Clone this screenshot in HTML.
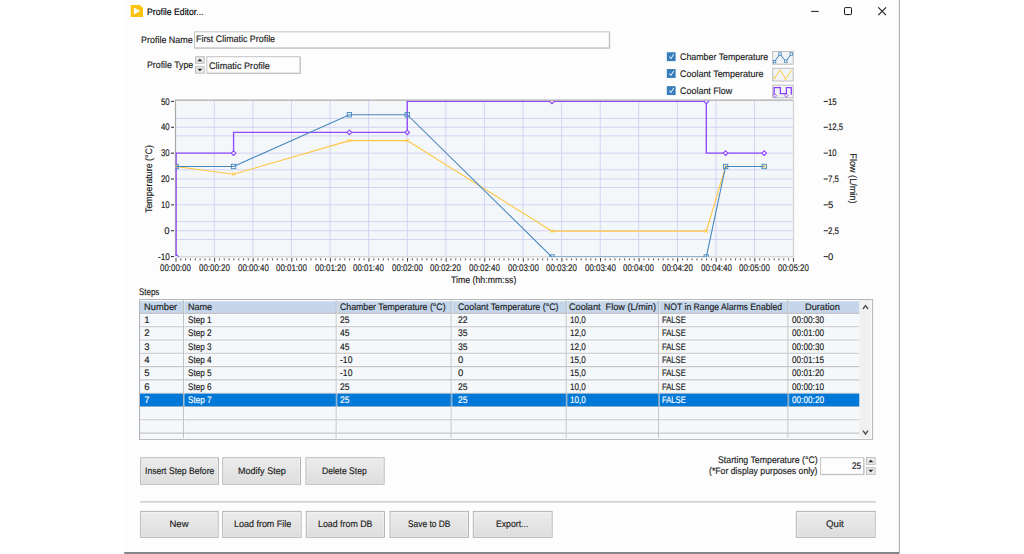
<!DOCTYPE html>
<html><head><meta charset="utf-8"><title>Profile Editor...</title><style>
html,body{margin:0;padding:0;background:#fff;}
body{width:1024px;height:554px;position:relative;overflow:hidden;font-family:"Liberation Sans",sans-serif;}
.abs{position:absolute;}
.t{position:absolute;white-space:pre;line-height:12px;height:12px;transform-origin:0 50%;-webkit-text-stroke:0.15px currentColor;text-rendering:geometricPrecision;}
</style></head><body>
<svg class="abs" style="left:0;top:0" width="1024" height="554" viewBox="0 0 1024 554"><defs><linearGradient id="bg" x1="0" y1="0" x2="0" y2="1"><stop offset="0" stop-color="#ececec"/><stop offset="1" stop-color="#dddddd"/></linearGradient></defs>
<rect x="124.20" y="0.00" width="775.40" height="552.20" fill="#fdfdfd" />
<line x1="899.30" y1="0.00" x2="899.30" y2="552.00" stroke="#a4a4a4" stroke-width="1.0"/>
<rect x="124.2" y="552.0" width="775.4" height="2.2" fill="#86878a"/>
<g transform="translate(130.7,4.9)"><path d="M0 0H9.2L12.3 3.1V12.2H0Z" fill="#ffc20e"/><path d="M3.2 2.7L9.4 6.1L3.2 9.5Z" fill="#fff"/></g>
<g fill="none" stroke="#1c1c1c" stroke-width="1"><path d="M811.1 11.4H818.7"/><rect x="844.5" y="7.6" width="7" height="7" rx="0.7"/><path d="M878.3 7.4L886 15.1M886 7.4L878.3 15.1" stroke-width="1.1"/></g>
<rect x="194.50" y="31.80" width="414.80" height="16.10" fill="#fdfdfd" stroke="#c4c4c4" stroke-width="1.0" />
<path d="M609.70 32.10 V48.30 H194.80" fill="none" stroke="#b4b4b4" stroke-width="0.6"/>
<rect x="206.80" y="56.70" width="93.20" height="16.40" fill="#fdfdfd" stroke="#c4c4c4" stroke-width="1.0" />
<path d="M300.40 57.00 V73.50 H207.10" fill="none" stroke="#b4b4b4" stroke-width="0.6"/>
<rect x="820.60" y="457.70" width="43.10" height="16.60" fill="#fdfdfd" stroke="#c4c4c4" stroke-width="1.0" />
<path d="M864.10 458.00 V474.70 H820.90" fill="none" stroke="#b4b4b4" stroke-width="0.6"/>
<rect x="195.55" y="56.65" width="8.70" height="6.65" fill="#e8e8e8" stroke="#bdbdbd" stroke-width="0.9" />
<path d="M197.40 61.18 L199.90 58.68 L202.40 61.18 Z" fill="#2a2a2a"/>
<rect x="195.55" y="66.60" width="8.70" height="6.65" fill="#e8e8e8" stroke="#bdbdbd" stroke-width="0.9" />
<path d="M197.40 68.73 L199.90 71.23 L202.40 68.73 Z" fill="#2a2a2a"/>
<rect x="866.45" y="457.55" width="8.70" height="6.80" fill="#e8e8e8" stroke="#bdbdbd" stroke-width="0.9" />
<path d="M868.30 462.15 L870.80 459.65 L873.30 462.15 Z" fill="#2a2a2a"/>
<rect x="866.45" y="467.65" width="8.70" height="6.80" fill="#e8e8e8" stroke="#bdbdbd" stroke-width="0.9" />
<path d="M868.30 469.85 L870.80 472.35 L873.30 469.85 Z" fill="#2a2a2a"/>
<g transform="translate(666.8,52.25)"><rect width="8.8" height="8.9" fill="#377dbb"/><path d="M2.7 4.3L4.1 6.5L6.9 1.9" fill="none" stroke="#fff" stroke-width="0.95"/></g>
<rect x="772.70" y="51.50" width="20.50" height="12.70" fill="#f1f4f7" stroke="#bdbdbd" stroke-width="1.0" />
<g transform="translate(666.8,69.05)"><rect width="8.8" height="8.9" fill="#377dbb"/><path d="M2.7 4.3L4.1 6.5L6.9 1.9" fill="none" stroke="#fff" stroke-width="0.95"/></g>
<rect x="772.70" y="68.30" width="20.50" height="12.70" fill="#f1f4f7" stroke="#bdbdbd" stroke-width="1.0" />
<g transform="translate(666.8,86.15)"><rect width="8.8" height="8.9" fill="#377dbb"/><path d="M2.7 4.3L4.1 6.5L6.9 1.9" fill="none" stroke="#fff" stroke-width="0.95"/></g>
<rect x="772.70" y="85.10" width="20.50" height="12.70" fill="#f1f4f7" stroke="#bdbdbd" stroke-width="1.0" />
<g transform="translate(772.2,50.8)" fill="none"><polyline points="2.3,10.9 7.7,3.3 13.6,10.5 19.0,3.3" stroke="#3f83bd" stroke-width="1"/><g stroke="#3f83bd" stroke-width="0.8" fill="#f1f4f7"><rect x="1.1" y="9.6" width="2.5" height="2.5"/><rect x="6.5" y="2.0" width="2.5" height="2.5"/><rect x="12.4" y="9.2" width="2.5" height="2.5"/><rect x="17.8" y="2.0" width="2.5" height="2.5"/></g></g>
<g transform="translate(772.2,67.6)" fill="none"><polyline points="2.3,10.7 7.7,2.4 13.3,11 19.6,2.6" stroke="#ffc63f" stroke-width="1"/><path d="M12.1 9.8l2.4 2.4m0 -2.4l-2.4 2.4M1.1 9.6l2.2 2.2m0 -2.2l-2.2 2.2" stroke="#ffc63f" stroke-width="0.8"/></g>
<g transform="translate(772.2,84.4)" fill="none"><polyline points="1.9,11.2 1.9,3.3 8.2,3.3 8.2,9.3 14.2,9.3 14.2,3.3 19.1,3.3 19.1,10.3" stroke="#8a3ffc" stroke-width="1.3"/><g stroke="#8a3ffc" stroke-width="0.8" fill="#f1f4f7"><path d="M2.7 9.5l1.8 1.8l-1.8 1.8l-1.8 -1.8z"/><path d="M14.1 9.3l1.8 1.8l-1.8 1.8l-1.8 -1.8z"/></g></g>
<rect x="139.55" y="299.60" width="733.00" height="139.75" fill="#f5f8fa" stroke="#b4b5b8" stroke-width="1.1" />
<rect x="140.00" y="300.05" width="719.50" height="1.20" fill="#fafbfc" />
<rect x="140.00" y="301.25" width="719.50" height="11.85" fill="#c5d6ea" />
<line x1="140.00" y1="314.40" x2="859.50" y2="314.40" stroke="rgba(255,255,255,0.7)" stroke-width="0.8"/>
<line x1="140.00" y1="313.40" x2="859.50" y2="313.40" stroke="#c4c4c8" stroke-width="1.1"/>
<line x1="140.00" y1="325.70" x2="859.50" y2="325.70" stroke="rgba(255,255,255,0.7)" stroke-width="0.8"/>
<line x1="140.00" y1="327.70" x2="859.50" y2="327.70" stroke="rgba(255,255,255,0.7)" stroke-width="0.8"/>
<line x1="140.00" y1="326.70" x2="859.50" y2="326.70" stroke="#c4c4c8" stroke-width="1.1"/>
<line x1="140.00" y1="339.00" x2="859.50" y2="339.00" stroke="rgba(255,255,255,0.7)" stroke-width="0.8"/>
<line x1="140.00" y1="341.00" x2="859.50" y2="341.00" stroke="rgba(255,255,255,0.7)" stroke-width="0.8"/>
<line x1="140.00" y1="340.00" x2="859.50" y2="340.00" stroke="#c4c4c8" stroke-width="1.1"/>
<line x1="140.00" y1="352.30" x2="859.50" y2="352.30" stroke="rgba(255,255,255,0.7)" stroke-width="0.8"/>
<line x1="140.00" y1="354.30" x2="859.50" y2="354.30" stroke="rgba(255,255,255,0.7)" stroke-width="0.8"/>
<line x1="140.00" y1="353.30" x2="859.50" y2="353.30" stroke="#c4c4c8" stroke-width="1.1"/>
<line x1="140.00" y1="365.60" x2="859.50" y2="365.60" stroke="rgba(255,255,255,0.7)" stroke-width="0.8"/>
<line x1="140.00" y1="367.60" x2="859.50" y2="367.60" stroke="rgba(255,255,255,0.7)" stroke-width="0.8"/>
<line x1="140.00" y1="366.60" x2="859.50" y2="366.60" stroke="#c4c4c8" stroke-width="1.1"/>
<line x1="140.00" y1="378.90" x2="859.50" y2="378.90" stroke="rgba(255,255,255,0.7)" stroke-width="0.8"/>
<line x1="140.00" y1="380.90" x2="859.50" y2="380.90" stroke="rgba(255,255,255,0.7)" stroke-width="0.8"/>
<line x1="140.00" y1="379.90" x2="859.50" y2="379.90" stroke="#c4c4c8" stroke-width="1.1"/>
<line x1="140.00" y1="392.20" x2="859.50" y2="392.20" stroke="rgba(255,255,255,0.7)" stroke-width="0.8"/>
<line x1="140.00" y1="394.20" x2="859.50" y2="394.20" stroke="rgba(255,255,255,0.7)" stroke-width="0.8"/>
<line x1="140.00" y1="393.20" x2="859.50" y2="393.20" stroke="#c4c4c8" stroke-width="1.1"/>
<line x1="140.00" y1="405.50" x2="859.50" y2="405.50" stroke="rgba(255,255,255,0.7)" stroke-width="0.8"/>
<line x1="140.00" y1="407.50" x2="859.50" y2="407.50" stroke="rgba(255,255,255,0.7)" stroke-width="0.8"/>
<line x1="140.00" y1="406.50" x2="859.50" y2="406.50" stroke="#c4c4c8" stroke-width="1.1"/>
<line x1="140.00" y1="418.80" x2="859.50" y2="418.80" stroke="rgba(255,255,255,0.7)" stroke-width="0.8"/>
<line x1="140.00" y1="420.80" x2="859.50" y2="420.80" stroke="rgba(255,255,255,0.7)" stroke-width="0.8"/>
<line x1="140.00" y1="419.80" x2="859.50" y2="419.80" stroke="#c4c4c8" stroke-width="1.1"/>
<line x1="140.00" y1="432.10" x2="859.50" y2="432.10" stroke="rgba(255,255,255,0.7)" stroke-width="0.8"/>
<line x1="140.00" y1="434.10" x2="859.50" y2="434.10" stroke="rgba(255,255,255,0.7)" stroke-width="0.8"/>
<line x1="140.00" y1="433.10" x2="859.50" y2="433.10" stroke="#c4c4c8" stroke-width="1.1"/>
<rect x="140.00" y="393.70" width="719.50" height="12.60" fill="#0078d7" />
<line x1="183.50" y1="300.05" x2="183.50" y2="438.90" stroke="#b7b7b7" stroke-width="0.9"/>
<line x1="184.30" y1="300.05" x2="184.30" y2="438.90" stroke="rgba(255,255,255,0.7)" stroke-width="0.6"/>
<line x1="336.20" y1="300.05" x2="336.20" y2="438.90" stroke="#b7b7b7" stroke-width="0.9"/>
<line x1="337.00" y1="300.05" x2="337.00" y2="438.90" stroke="rgba(255,255,255,0.7)" stroke-width="0.6"/>
<line x1="451.20" y1="300.05" x2="451.20" y2="438.90" stroke="#b7b7b7" stroke-width="0.9"/>
<line x1="452.00" y1="300.05" x2="452.00" y2="438.90" stroke="rgba(255,255,255,0.7)" stroke-width="0.6"/>
<line x1="566.30" y1="300.05" x2="566.30" y2="438.90" stroke="#b7b7b7" stroke-width="0.9"/>
<line x1="567.10" y1="300.05" x2="567.10" y2="438.90" stroke="rgba(255,255,255,0.7)" stroke-width="0.6"/>
<line x1="658.70" y1="300.05" x2="658.70" y2="438.90" stroke="#b7b7b7" stroke-width="0.9"/>
<line x1="659.50" y1="300.05" x2="659.50" y2="438.90" stroke="rgba(255,255,255,0.7)" stroke-width="0.6"/>
<line x1="788.00" y1="300.05" x2="788.00" y2="438.90" stroke="#b7b7b7" stroke-width="0.9"/>
<line x1="788.80" y1="300.05" x2="788.80" y2="438.90" stroke="rgba(255,255,255,0.7)" stroke-width="0.6"/>
<rect x="859.50" y="300.05" width="12.60" height="138.85" fill="#f0f0f0" />
<path d="M862.9 309.0L865.45 305.6L868.0 309.0" fill="none" stroke="#4c4c4c" stroke-width="1.35"/>
<path d="M862.9 430.6L865.45 434.0L868.0 430.6" fill="none" stroke="#4c4c4c" stroke-width="1.35"/>
<line x1="871.50" y1="300.25" x2="871.50" y2="438.70" stroke="#fbfbfb" stroke-width="0.9"/>
<line x1="140.00" y1="438.30" x2="872.10" y2="438.30" stroke="#fbfbfb" stroke-width="0.9"/>
<rect x="140.70" y="457.80" width="77.70" height="26.40" fill="url(#bg)" stroke="#b2b2b2" stroke-width="1.0" />
<rect x="141.60" y="458.70" width="75.90" height="24.60" fill="none" stroke="rgba(255,255,255,0.45)" stroke-width="0.8"/>
<rect x="222.80" y="457.80" width="77.70" height="26.40" fill="url(#bg)" stroke="#b2b2b2" stroke-width="1.0" />
<rect x="223.70" y="458.70" width="75.90" height="24.60" fill="none" stroke="rgba(255,255,255,0.45)" stroke-width="0.8"/>
<rect x="306.00" y="457.80" width="78.10" height="26.40" fill="url(#bg)" stroke="#b2b2b2" stroke-width="1.0" />
<rect x="306.90" y="458.70" width="76.30" height="24.60" fill="none" stroke="rgba(255,255,255,0.45)" stroke-width="0.8"/>
<rect x="140.70" y="511.40" width="77.40" height="25.90" fill="url(#bg)" stroke="#b2b2b2" stroke-width="1.0" />
<rect x="141.60" y="512.30" width="75.60" height="24.10" fill="none" stroke="rgba(255,255,255,0.45)" stroke-width="0.8"/>
<rect x="222.70" y="511.40" width="78.40" height="25.90" fill="url(#bg)" stroke="#b2b2b2" stroke-width="1.0" />
<rect x="223.60" y="512.30" width="76.60" height="24.10" fill="none" stroke="rgba(255,255,255,0.45)" stroke-width="0.8"/>
<rect x="306.30" y="511.40" width="78.10" height="25.90" fill="url(#bg)" stroke="#b2b2b2" stroke-width="1.0" />
<rect x="307.20" y="512.30" width="76.30" height="24.10" fill="none" stroke="rgba(255,255,255,0.45)" stroke-width="0.8"/>
<rect x="390.10" y="511.40" width="78.40" height="25.90" fill="url(#bg)" stroke="#b2b2b2" stroke-width="1.0" />
<rect x="391.00" y="512.30" width="76.60" height="24.10" fill="none" stroke="rgba(255,255,255,0.45)" stroke-width="0.8"/>
<rect x="473.30" y="511.40" width="78.80" height="25.90" fill="url(#bg)" stroke="#b2b2b2" stroke-width="1.0" />
<rect x="474.20" y="512.30" width="77.00" height="24.10" fill="none" stroke="rgba(255,255,255,0.45)" stroke-width="0.8"/>
<rect x="796.30" y="511.40" width="78.80" height="25.90" fill="url(#bg)" stroke="#b2b2b2" stroke-width="1.0" />
<rect x="797.20" y="512.30" width="77.00" height="24.10" fill="none" stroke="rgba(255,255,255,0.45)" stroke-width="0.8"/>
<line x1="140.00" y1="501.90" x2="876.00" y2="501.90" stroke="#d3d3d3" stroke-width="1.6"/></svg>
<svg class="abs" style="left:0;top:0" width="1024" height="554" viewBox="0 0 1024 554" font-family='"Liberation Sans", sans-serif'><rect x="175.5" y="100.2" width="618.0" height="156.6" fill="#f4f7f9"/>
<line x1="214.29" y1="100.2" x2="214.29" y2="256.8" stroke="#d3d3f4" stroke-width="1"/>
<line x1="252.88" y1="100.2" x2="252.88" y2="256.8" stroke="#d3d3f4" stroke-width="1"/>
<line x1="291.47" y1="100.2" x2="291.47" y2="256.8" stroke="#d3d3f4" stroke-width="1"/>
<line x1="330.06" y1="100.2" x2="330.06" y2="256.8" stroke="#d3d3f4" stroke-width="1"/>
<line x1="368.65" y1="100.2" x2="368.65" y2="256.8" stroke="#d3d3f4" stroke-width="1"/>
<line x1="407.24" y1="100.2" x2="407.24" y2="256.8" stroke="#d3d3f4" stroke-width="1"/>
<line x1="445.83" y1="100.2" x2="445.83" y2="256.8" stroke="#d3d3f4" stroke-width="1"/>
<line x1="484.42" y1="100.2" x2="484.42" y2="256.8" stroke="#d3d3f4" stroke-width="1"/>
<line x1="523.01" y1="100.2" x2="523.01" y2="256.8" stroke="#d3d3f4" stroke-width="1"/>
<line x1="561.60" y1="100.2" x2="561.60" y2="256.8" stroke="#d3d3f4" stroke-width="1"/>
<line x1="600.19" y1="100.2" x2="600.19" y2="256.8" stroke="#d3d3f4" stroke-width="1"/>
<line x1="638.78" y1="100.2" x2="638.78" y2="256.8" stroke="#d3d3f4" stroke-width="1"/>
<line x1="677.37" y1="100.2" x2="677.37" y2="256.8" stroke="#d3d3f4" stroke-width="1"/>
<line x1="715.96" y1="100.2" x2="715.96" y2="256.8" stroke="#d3d3f4" stroke-width="1"/>
<line x1="754.55" y1="100.2" x2="754.55" y2="256.8" stroke="#d3d3f4" stroke-width="1"/>
<line x1="175.5" y1="127.27" x2="793.5" y2="127.27" stroke="#d3d3f4" stroke-width="1"/>
<line x1="175.5" y1="153.13" x2="793.5" y2="153.13" stroke="#d3d3f4" stroke-width="1"/>
<line x1="175.5" y1="179.00" x2="793.5" y2="179.00" stroke="#d3d3f4" stroke-width="1"/>
<line x1="175.5" y1="204.87" x2="793.5" y2="204.87" stroke="#d3d3f4" stroke-width="1"/>
<line x1="175.5" y1="230.73" x2="793.5" y2="230.73" stroke="#d3d3f4" stroke-width="1"/>
<line x1="175.5" y1="118.50" x2="793.5" y2="118.50" stroke="#d3d3f4" stroke-width="1"/>
<line x1="175.5" y1="135.90" x2="793.5" y2="135.90" stroke="#d3d3f4" stroke-width="1"/>
<line x1="175.5" y1="169.80" x2="793.5" y2="169.80" stroke="#d3d3f4" stroke-width="1"/>
<line x1="175.5" y1="187.50" x2="793.5" y2="187.50" stroke="#d3d3f4" stroke-width="1"/>
<line x1="175.5" y1="221.60" x2="793.5" y2="221.60" stroke="#d3d3f4" stroke-width="1"/>
<line x1="175.5" y1="239.50" x2="793.5" y2="239.50" stroke="#d3d3f4" stroke-width="1"/>
<path d="M175.5 256.8 V100.2 H793.5" fill="none" stroke="#a9a9a9" stroke-width="1.2"/>
<path d="M793.5 100.2 V256.8 H175.5" fill="none" stroke="#d0d2d6" stroke-width="1.2"/>
<line x1="176.00" y1="258" x2="176.00" y2="261.7" stroke="#444" stroke-width="1"/>
<line x1="180.82" y1="258.5" x2="180.82" y2="260.3" stroke="#333" stroke-width="0.9"/>
<line x1="185.65" y1="258.5" x2="185.65" y2="260.3" stroke="#333" stroke-width="0.9"/>
<line x1="190.47" y1="258.5" x2="190.47" y2="260.3" stroke="#333" stroke-width="0.9"/>
<line x1="195.30" y1="258.5" x2="195.30" y2="260.3" stroke="#333" stroke-width="0.9"/>
<line x1="200.12" y1="258.5" x2="200.12" y2="260.3" stroke="#333" stroke-width="0.9"/>
<line x1="204.94" y1="258.5" x2="204.94" y2="260.3" stroke="#333" stroke-width="0.9"/>
<line x1="209.77" y1="258.5" x2="209.77" y2="260.3" stroke="#333" stroke-width="0.9"/>
<line x1="214.59" y1="258" x2="214.59" y2="261.7" stroke="#444" stroke-width="1"/>
<line x1="219.41" y1="258.5" x2="219.41" y2="260.3" stroke="#333" stroke-width="0.9"/>
<line x1="224.24" y1="258.5" x2="224.24" y2="260.3" stroke="#333" stroke-width="0.9"/>
<line x1="229.06" y1="258.5" x2="229.06" y2="260.3" stroke="#333" stroke-width="0.9"/>
<line x1="233.88" y1="258.5" x2="233.88" y2="260.3" stroke="#333" stroke-width="0.9"/>
<line x1="238.71" y1="258.5" x2="238.71" y2="260.3" stroke="#333" stroke-width="0.9"/>
<line x1="243.53" y1="258.5" x2="243.53" y2="260.3" stroke="#333" stroke-width="0.9"/>
<line x1="248.36" y1="258.5" x2="248.36" y2="260.3" stroke="#333" stroke-width="0.9"/>
<line x1="253.18" y1="258" x2="253.18" y2="261.7" stroke="#444" stroke-width="1"/>
<line x1="258.00" y1="258.5" x2="258.00" y2="260.3" stroke="#333" stroke-width="0.9"/>
<line x1="262.83" y1="258.5" x2="262.83" y2="260.3" stroke="#333" stroke-width="0.9"/>
<line x1="267.65" y1="258.5" x2="267.65" y2="260.3" stroke="#333" stroke-width="0.9"/>
<line x1="272.47" y1="258.5" x2="272.47" y2="260.3" stroke="#333" stroke-width="0.9"/>
<line x1="277.30" y1="258.5" x2="277.30" y2="260.3" stroke="#333" stroke-width="0.9"/>
<line x1="282.12" y1="258.5" x2="282.12" y2="260.3" stroke="#333" stroke-width="0.9"/>
<line x1="286.95" y1="258.5" x2="286.95" y2="260.3" stroke="#333" stroke-width="0.9"/>
<line x1="291.77" y1="258" x2="291.77" y2="261.7" stroke="#444" stroke-width="1"/>
<line x1="296.59" y1="258.5" x2="296.59" y2="260.3" stroke="#333" stroke-width="0.9"/>
<line x1="301.42" y1="258.5" x2="301.42" y2="260.3" stroke="#333" stroke-width="0.9"/>
<line x1="306.24" y1="258.5" x2="306.24" y2="260.3" stroke="#333" stroke-width="0.9"/>
<line x1="311.06" y1="258.5" x2="311.06" y2="260.3" stroke="#333" stroke-width="0.9"/>
<line x1="315.89" y1="258.5" x2="315.89" y2="260.3" stroke="#333" stroke-width="0.9"/>
<line x1="320.71" y1="258.5" x2="320.71" y2="260.3" stroke="#333" stroke-width="0.9"/>
<line x1="325.54" y1="258.5" x2="325.54" y2="260.3" stroke="#333" stroke-width="0.9"/>
<line x1="330.36" y1="258" x2="330.36" y2="261.7" stroke="#444" stroke-width="1"/>
<line x1="335.18" y1="258.5" x2="335.18" y2="260.3" stroke="#333" stroke-width="0.9"/>
<line x1="340.01" y1="258.5" x2="340.01" y2="260.3" stroke="#333" stroke-width="0.9"/>
<line x1="344.83" y1="258.5" x2="344.83" y2="260.3" stroke="#333" stroke-width="0.9"/>
<line x1="349.66" y1="258.5" x2="349.66" y2="260.3" stroke="#333" stroke-width="0.9"/>
<line x1="354.48" y1="258.5" x2="354.48" y2="260.3" stroke="#333" stroke-width="0.9"/>
<line x1="359.30" y1="258.5" x2="359.30" y2="260.3" stroke="#333" stroke-width="0.9"/>
<line x1="364.13" y1="258.5" x2="364.13" y2="260.3" stroke="#333" stroke-width="0.9"/>
<line x1="368.95" y1="258" x2="368.95" y2="261.7" stroke="#444" stroke-width="1"/>
<line x1="373.77" y1="258.5" x2="373.77" y2="260.3" stroke="#333" stroke-width="0.9"/>
<line x1="378.60" y1="258.5" x2="378.60" y2="260.3" stroke="#333" stroke-width="0.9"/>
<line x1="383.42" y1="258.5" x2="383.42" y2="260.3" stroke="#333" stroke-width="0.9"/>
<line x1="388.25" y1="258.5" x2="388.25" y2="260.3" stroke="#333" stroke-width="0.9"/>
<line x1="393.07" y1="258.5" x2="393.07" y2="260.3" stroke="#333" stroke-width="0.9"/>
<line x1="397.89" y1="258.5" x2="397.89" y2="260.3" stroke="#333" stroke-width="0.9"/>
<line x1="402.72" y1="258.5" x2="402.72" y2="260.3" stroke="#333" stroke-width="0.9"/>
<line x1="407.54" y1="258" x2="407.54" y2="261.7" stroke="#444" stroke-width="1"/>
<line x1="412.36" y1="258.5" x2="412.36" y2="260.3" stroke="#333" stroke-width="0.9"/>
<line x1="417.19" y1="258.5" x2="417.19" y2="260.3" stroke="#333" stroke-width="0.9"/>
<line x1="422.01" y1="258.5" x2="422.01" y2="260.3" stroke="#333" stroke-width="0.9"/>
<line x1="426.83" y1="258.5" x2="426.83" y2="260.3" stroke="#333" stroke-width="0.9"/>
<line x1="431.66" y1="258.5" x2="431.66" y2="260.3" stroke="#333" stroke-width="0.9"/>
<line x1="436.48" y1="258.5" x2="436.48" y2="260.3" stroke="#333" stroke-width="0.9"/>
<line x1="441.31" y1="258.5" x2="441.31" y2="260.3" stroke="#333" stroke-width="0.9"/>
<line x1="446.13" y1="258" x2="446.13" y2="261.7" stroke="#444" stroke-width="1"/>
<line x1="450.95" y1="258.5" x2="450.95" y2="260.3" stroke="#333" stroke-width="0.9"/>
<line x1="455.78" y1="258.5" x2="455.78" y2="260.3" stroke="#333" stroke-width="0.9"/>
<line x1="460.60" y1="258.5" x2="460.60" y2="260.3" stroke="#333" stroke-width="0.9"/>
<line x1="465.43" y1="258.5" x2="465.43" y2="260.3" stroke="#333" stroke-width="0.9"/>
<line x1="470.25" y1="258.5" x2="470.25" y2="260.3" stroke="#333" stroke-width="0.9"/>
<line x1="475.07" y1="258.5" x2="475.07" y2="260.3" stroke="#333" stroke-width="0.9"/>
<line x1="479.90" y1="258.5" x2="479.90" y2="260.3" stroke="#333" stroke-width="0.9"/>
<line x1="484.72" y1="258" x2="484.72" y2="261.7" stroke="#444" stroke-width="1"/>
<line x1="489.54" y1="258.5" x2="489.54" y2="260.3" stroke="#333" stroke-width="0.9"/>
<line x1="494.37" y1="258.5" x2="494.37" y2="260.3" stroke="#333" stroke-width="0.9"/>
<line x1="499.19" y1="258.5" x2="499.19" y2="260.3" stroke="#333" stroke-width="0.9"/>
<line x1="504.01" y1="258.5" x2="504.01" y2="260.3" stroke="#333" stroke-width="0.9"/>
<line x1="508.84" y1="258.5" x2="508.84" y2="260.3" stroke="#333" stroke-width="0.9"/>
<line x1="513.66" y1="258.5" x2="513.66" y2="260.3" stroke="#333" stroke-width="0.9"/>
<line x1="518.49" y1="258.5" x2="518.49" y2="260.3" stroke="#333" stroke-width="0.9"/>
<line x1="523.31" y1="258" x2="523.31" y2="261.7" stroke="#444" stroke-width="1"/>
<line x1="528.13" y1="258.5" x2="528.13" y2="260.3" stroke="#333" stroke-width="0.9"/>
<line x1="532.96" y1="258.5" x2="532.96" y2="260.3" stroke="#333" stroke-width="0.9"/>
<line x1="537.78" y1="258.5" x2="537.78" y2="260.3" stroke="#333" stroke-width="0.9"/>
<line x1="542.61" y1="258.5" x2="542.61" y2="260.3" stroke="#333" stroke-width="0.9"/>
<line x1="547.43" y1="258.5" x2="547.43" y2="260.3" stroke="#333" stroke-width="0.9"/>
<line x1="552.25" y1="258.5" x2="552.25" y2="260.3" stroke="#333" stroke-width="0.9"/>
<line x1="557.08" y1="258.5" x2="557.08" y2="260.3" stroke="#333" stroke-width="0.9"/>
<line x1="561.90" y1="258" x2="561.90" y2="261.7" stroke="#444" stroke-width="1"/>
<line x1="566.72" y1="258.5" x2="566.72" y2="260.3" stroke="#333" stroke-width="0.9"/>
<line x1="571.55" y1="258.5" x2="571.55" y2="260.3" stroke="#333" stroke-width="0.9"/>
<line x1="576.37" y1="258.5" x2="576.37" y2="260.3" stroke="#333" stroke-width="0.9"/>
<line x1="581.19" y1="258.5" x2="581.19" y2="260.3" stroke="#333" stroke-width="0.9"/>
<line x1="586.02" y1="258.5" x2="586.02" y2="260.3" stroke="#333" stroke-width="0.9"/>
<line x1="590.84" y1="258.5" x2="590.84" y2="260.3" stroke="#333" stroke-width="0.9"/>
<line x1="595.67" y1="258.5" x2="595.67" y2="260.3" stroke="#333" stroke-width="0.9"/>
<line x1="600.49" y1="258" x2="600.49" y2="261.7" stroke="#444" stroke-width="1"/>
<line x1="605.31" y1="258.5" x2="605.31" y2="260.3" stroke="#333" stroke-width="0.9"/>
<line x1="610.14" y1="258.5" x2="610.14" y2="260.3" stroke="#333" stroke-width="0.9"/>
<line x1="614.96" y1="258.5" x2="614.96" y2="260.3" stroke="#333" stroke-width="0.9"/>
<line x1="619.78" y1="258.5" x2="619.78" y2="260.3" stroke="#333" stroke-width="0.9"/>
<line x1="624.61" y1="258.5" x2="624.61" y2="260.3" stroke="#333" stroke-width="0.9"/>
<line x1="629.43" y1="258.5" x2="629.43" y2="260.3" stroke="#333" stroke-width="0.9"/>
<line x1="634.26" y1="258.5" x2="634.26" y2="260.3" stroke="#333" stroke-width="0.9"/>
<line x1="639.08" y1="258" x2="639.08" y2="261.7" stroke="#444" stroke-width="1"/>
<line x1="643.90" y1="258.5" x2="643.90" y2="260.3" stroke="#333" stroke-width="0.9"/>
<line x1="648.73" y1="258.5" x2="648.73" y2="260.3" stroke="#333" stroke-width="0.9"/>
<line x1="653.55" y1="258.5" x2="653.55" y2="260.3" stroke="#333" stroke-width="0.9"/>
<line x1="658.38" y1="258.5" x2="658.38" y2="260.3" stroke="#333" stroke-width="0.9"/>
<line x1="663.20" y1="258.5" x2="663.20" y2="260.3" stroke="#333" stroke-width="0.9"/>
<line x1="668.02" y1="258.5" x2="668.02" y2="260.3" stroke="#333" stroke-width="0.9"/>
<line x1="672.85" y1="258.5" x2="672.85" y2="260.3" stroke="#333" stroke-width="0.9"/>
<line x1="677.67" y1="258" x2="677.67" y2="261.7" stroke="#444" stroke-width="1"/>
<line x1="682.49" y1="258.5" x2="682.49" y2="260.3" stroke="#333" stroke-width="0.9"/>
<line x1="687.32" y1="258.5" x2="687.32" y2="260.3" stroke="#333" stroke-width="0.9"/>
<line x1="692.14" y1="258.5" x2="692.14" y2="260.3" stroke="#333" stroke-width="0.9"/>
<line x1="696.96" y1="258.5" x2="696.96" y2="260.3" stroke="#333" stroke-width="0.9"/>
<line x1="701.79" y1="258.5" x2="701.79" y2="260.3" stroke="#333" stroke-width="0.9"/>
<line x1="706.61" y1="258.5" x2="706.61" y2="260.3" stroke="#333" stroke-width="0.9"/>
<line x1="711.44" y1="258.5" x2="711.44" y2="260.3" stroke="#333" stroke-width="0.9"/>
<line x1="716.26" y1="258" x2="716.26" y2="261.7" stroke="#444" stroke-width="1"/>
<line x1="721.08" y1="258.5" x2="721.08" y2="260.3" stroke="#333" stroke-width="0.9"/>
<line x1="725.91" y1="258.5" x2="725.91" y2="260.3" stroke="#333" stroke-width="0.9"/>
<line x1="730.73" y1="258.5" x2="730.73" y2="260.3" stroke="#333" stroke-width="0.9"/>
<line x1="735.55" y1="258.5" x2="735.55" y2="260.3" stroke="#333" stroke-width="0.9"/>
<line x1="740.38" y1="258.5" x2="740.38" y2="260.3" stroke="#333" stroke-width="0.9"/>
<line x1="745.20" y1="258.5" x2="745.20" y2="260.3" stroke="#333" stroke-width="0.9"/>
<line x1="750.03" y1="258.5" x2="750.03" y2="260.3" stroke="#333" stroke-width="0.9"/>
<line x1="754.85" y1="258" x2="754.85" y2="261.7" stroke="#444" stroke-width="1"/>
<line x1="759.67" y1="258.5" x2="759.67" y2="260.3" stroke="#333" stroke-width="0.9"/>
<line x1="764.50" y1="258.5" x2="764.50" y2="260.3" stroke="#333" stroke-width="0.9"/>
<line x1="769.32" y1="258.5" x2="769.32" y2="260.3" stroke="#333" stroke-width="0.9"/>
<line x1="774.14" y1="258.5" x2="774.14" y2="260.3" stroke="#333" stroke-width="0.9"/>
<line x1="778.97" y1="258.5" x2="778.97" y2="260.3" stroke="#333" stroke-width="0.9"/>
<line x1="783.79" y1="258.5" x2="783.79" y2="260.3" stroke="#333" stroke-width="0.9"/>
<line x1="788.62" y1="258.5" x2="788.62" y2="260.3" stroke="#333" stroke-width="0.9"/>
<line x1="793.44" y1="258" x2="793.44" y2="261.7" stroke="#444" stroke-width="1"/>
<line x1="171" y1="101.40" x2="174" y2="101.40" stroke="#222" stroke-width="1"/>
<line x1="171" y1="127.27" x2="174" y2="127.27" stroke="#222" stroke-width="1"/>
<line x1="171" y1="153.13" x2="174" y2="153.13" stroke="#222" stroke-width="1"/>
<line x1="171" y1="179.00" x2="174" y2="179.00" stroke="#222" stroke-width="1"/>
<line x1="171" y1="204.87" x2="174" y2="204.87" stroke="#222" stroke-width="1"/>
<line x1="171" y1="230.73" x2="174" y2="230.73" stroke="#222" stroke-width="1"/>
<line x1="171" y1="256.60" x2="174" y2="256.60" stroke="#222" stroke-width="1"/>
<line x1="823.7" y1="101.40" x2="827.9" y2="101.40" stroke="#222" stroke-width="1"/>
<line x1="823.7" y1="127.27" x2="827.9" y2="127.27" stroke="#222" stroke-width="1"/>
<line x1="823.7" y1="153.13" x2="827.9" y2="153.13" stroke="#222" stroke-width="1"/>
<line x1="823.7" y1="179.00" x2="827.9" y2="179.00" stroke="#222" stroke-width="1"/>
<line x1="823.7" y1="204.87" x2="827.9" y2="204.87" stroke="#222" stroke-width="1"/>
<line x1="823.7" y1="230.73" x2="827.9" y2="230.73" stroke="#222" stroke-width="1"/>
<line x1="823.7" y1="256.60" x2="827.9" y2="256.60" stroke="#222" stroke-width="1"/>
<clipPath id="cp"><rect x="175.5" y="100.7" width="618.6" height="156.4"/></clipPath>
<g clip-path="url(#cp)">
<polyline fill="none" stroke="#8f47fb" stroke-width="1.35" points="176.10,256.60 176.10,153.13 233.58,153.13 233.58,132.44 407.24,132.44 407.24,101.40 706.31,101.40 706.31,153.13 764.20,153.13"/>
<path d="M176.10 254.30 l2.3 2.3 l-2.3 2.3 l-2.3 -2.3 z" fill="#f4f7f9" stroke="#8f47fb" stroke-width="1.1"/>
<path d="M233.58 150.83 l2.3 2.3 l-2.3 2.3 l-2.3 -2.3 z" fill="#f4f7f9" stroke="#8f47fb" stroke-width="1.1"/>
<path d="M349.36 130.14 l2.3 2.3 l-2.3 2.3 l-2.3 -2.3 z" fill="#f4f7f9" stroke="#8f47fb" stroke-width="1.1"/>
<path d="M407.24 130.14 l2.3 2.3 l-2.3 2.3 l-2.3 -2.3 z" fill="#f4f7f9" stroke="#8f47fb" stroke-width="1.1"/>
<path d="M551.95 99.10 l2.3 2.3 l-2.3 2.3 l-2.3 -2.3 z" fill="#f4f7f9" stroke="#8f47fb" stroke-width="1.1"/>
<path d="M706.31 99.10 l2.3 2.3 l-2.3 2.3 l-2.3 -2.3 z" fill="#f4f7f9" stroke="#8f47fb" stroke-width="1.1"/>
<path d="M725.61 150.83 l2.3 2.3 l-2.3 2.3 l-2.3 -2.3 z" fill="#f4f7f9" stroke="#8f47fb" stroke-width="1.1"/>
<path d="M764.20 150.83 l2.3 2.3 l-2.3 2.3 l-2.3 -2.3 z" fill="#f4f7f9" stroke="#8f47fb" stroke-width="1.1"/>
<polyline fill="none" stroke="#ffc63f" stroke-width="1.1" points="176.10,166.47 233.58,174.23 349.36,140.60 407.24,140.60 551.95,231.13 706.31,231.13 725.61,166.47 764.20,166.47"/>
<path d="M174.30 164.67 l3.6 3.6 M174.30 168.27 l3.6 -3.6" stroke="#ffc63f" stroke-width="0.9" fill="none"/>
<path d="M231.78 172.43 l3.6 3.6 M231.78 176.03 l3.6 -3.6" stroke="#ffc63f" stroke-width="0.9" fill="none"/>
<path d="M347.56 138.80 l3.6 3.6 M347.56 142.40 l3.6 -3.6" stroke="#ffc63f" stroke-width="0.9" fill="none"/>
<path d="M405.44 138.80 l3.6 3.6 M405.44 142.40 l3.6 -3.6" stroke="#ffc63f" stroke-width="0.9" fill="none"/>
<path d="M550.15 229.33 l3.6 3.6 M550.15 232.93 l3.6 -3.6" stroke="#ffc63f" stroke-width="0.9" fill="none"/>
<path d="M704.51 229.33 l3.6 3.6 M704.51 232.93 l3.6 -3.6" stroke="#ffc63f" stroke-width="0.9" fill="none"/>
<path d="M723.81 164.67 l3.6 3.6 M723.81 168.27 l3.6 -3.6" stroke="#ffc63f" stroke-width="0.9" fill="none"/>
<path d="M762.40 164.67 l3.6 3.6 M762.40 168.27 l3.6 -3.6" stroke="#ffc63f" stroke-width="0.9" fill="none"/>
<polyline fill="none" stroke="#4687be" stroke-width="1.1" points="176.10,166.47 233.58,166.47 349.36,114.73 407.24,114.73 551.95,257.00 706.31,257.00 725.61,166.47 764.20,166.47"/>
<rect x="173.90" y="164.27" width="4.4" height="4.4" fill="none" stroke="#4687be" stroke-width="0.9"/>
<rect x="231.38" y="164.27" width="4.4" height="4.4" fill="none" stroke="#4687be" stroke-width="0.9"/>
<rect x="347.16" y="112.53" width="4.4" height="4.4" fill="none" stroke="#4687be" stroke-width="0.9"/>
<rect x="405.04" y="112.53" width="4.4" height="4.4" fill="none" stroke="#4687be" stroke-width="0.9"/>
<rect x="549.75" y="254.80" width="4.4" height="4.4" fill="none" stroke="#4687be" stroke-width="0.9"/>
<rect x="704.11" y="254.80" width="4.4" height="4.4" fill="none" stroke="#4687be" stroke-width="0.9"/>
<rect x="723.41" y="164.27" width="4.4" height="4.4" fill="none" stroke="#4687be" stroke-width="0.9"/>
<rect x="762.00" y="164.27" width="4.4" height="4.4" fill="none" stroke="#4687be" stroke-width="0.9"/>
</g>
<text transform="translate(151.6,179.1) rotate(-90) scale(0.93,1)" text-anchor="middle" font-size="9.5" fill="#1a1a1a" stroke="#1a1a1a" stroke-width="0.15" text-rendering="geometricPrecision">Temperature (°C)</text>
<text transform="translate(849.7,178.4) rotate(90) scale(0.96,1)" text-anchor="middle" font-size="9.5" fill="#1a1a1a" stroke="#1a1a1a" stroke-width="0.15" text-rendering="geometricPrecision">Flow (L/min)</text></svg>
<span class="t" style="left:146.6px;top:7.1px;font-size:9.5px;color:#000;transform:scaleX(0.915);">Profile Editor...</span>
<span class="t" style="left:140.8px;top:34.9px;font-size:9.5px;color:#1a1a1a;transform:scaleX(0.942);">Profile Name</span>
<span class="t" style="left:196.3px;top:33.7px;font-size:9.5px;color:#1a1a1a;transform:scaleX(0.936);">First Climatic Profile</span>
<span class="t" style="left:147.1px;top:59.6px;font-size:9.5px;color:#1a1a1a;transform:scaleX(0.924);">Profile Type</span>
<span class="t" style="left:208.6px;top:60.6px;font-size:9.5px;color:#1a1a1a;transform:scaleX(0.961);">Climatic Profile</span>
<span class="t" style="left:679.7px;top:52.2px;font-size:9.5px;color:#1a1a1a;transform:scaleX(0.930);">Chamber Temperature</span>
<span class="t" style="left:679.7px;top:69.1px;font-size:9.5px;color:#1a1a1a;transform:scaleX(0.942);">Coolant Temperature</span>
<span class="t" style="left:679.7px;top:86.2px;font-size:9.5px;color:#1a1a1a;transform:scaleX(0.942);">Coolant Flow</span>
<span class="t" style="left:160.7px;top:96.5px;font-size:9.5px;color:#1a1a1a;transform:scaleX(0.825);">50</span>
<span class="t" style="left:160.7px;top:122.4px;font-size:9.5px;color:#1a1a1a;transform:scaleX(0.825);">40</span>
<span class="t" style="left:160.7px;top:148.2px;font-size:9.5px;color:#1a1a1a;transform:scaleX(0.825);">30</span>
<span class="t" style="left:160.7px;top:174.1px;font-size:9.5px;color:#1a1a1a;transform:scaleX(0.825);">20</span>
<span class="t" style="left:160.7px;top:200.0px;font-size:9.5px;color:#1a1a1a;transform:scaleX(0.825);">10</span>
<span class="t" style="left:164.3px;top:225.8px;font-size:9.5px;color:#1a1a1a;transform:scaleX(1.000);">0</span>
<span class="t" style="left:157.6px;top:251.7px;font-size:9.5px;color:#1a1a1a;transform:scaleX(0.864);">-10</span>
<span class="t" style="left:828.2px;top:96.5px;font-size:9.5px;color:#1a1a1a;transform:scaleX(0.825);">15</span>
<span class="t" style="left:828.2px;top:122.4px;font-size:9.5px;color:#1a1a1a;transform:scaleX(0.817);">12,5</span>
<span class="t" style="left:828.2px;top:148.2px;font-size:9.5px;color:#1a1a1a;transform:scaleX(0.825);">10</span>
<span class="t" style="left:828.2px;top:174.1px;font-size:9.5px;color:#1a1a1a;transform:scaleX(0.835);">7,5</span>
<span class="t" style="left:828.1px;top:200.0px;font-size:9.5px;color:#1a1a1a;transform:scaleX(1.000);">5</span>
<span class="t" style="left:828.2px;top:225.8px;font-size:9.5px;color:#1a1a1a;transform:scaleX(0.835);">2,5</span>
<span class="t" style="left:828.1px;top:251.7px;font-size:9.5px;color:#1a1a1a;transform:scaleX(1.000);">0</span>
<span class="t" style="left:160.3px;top:263.0px;font-size:9.5px;color:#1a1a1a;transform:scaleX(0.836);">00:00:00</span>
<span class="t" style="left:198.9px;top:263.0px;font-size:9.5px;color:#1a1a1a;transform:scaleX(0.836);">00:00:20</span>
<span class="t" style="left:237.5px;top:263.0px;font-size:9.5px;color:#1a1a1a;transform:scaleX(0.836);">00:00:40</span>
<span class="t" style="left:276.1px;top:263.0px;font-size:9.5px;color:#1a1a1a;transform:scaleX(0.836);">00:01:00</span>
<span class="t" style="left:314.6px;top:263.0px;font-size:9.5px;color:#1a1a1a;transform:scaleX(0.836);">00:01:20</span>
<span class="t" style="left:353.2px;top:263.0px;font-size:9.5px;color:#1a1a1a;transform:scaleX(0.836);">00:01:40</span>
<span class="t" style="left:391.8px;top:263.0px;font-size:9.5px;color:#1a1a1a;transform:scaleX(0.836);">00:02:00</span>
<span class="t" style="left:430.4px;top:263.0px;font-size:9.5px;color:#1a1a1a;transform:scaleX(0.836);">00:02:20</span>
<span class="t" style="left:469.0px;top:263.0px;font-size:9.5px;color:#1a1a1a;transform:scaleX(0.836);">00:02:40</span>
<span class="t" style="left:507.6px;top:263.0px;font-size:9.5px;color:#1a1a1a;transform:scaleX(0.836);">00:03:00</span>
<span class="t" style="left:546.2px;top:263.0px;font-size:9.5px;color:#1a1a1a;transform:scaleX(0.836);">00:03:20</span>
<span class="t" style="left:584.8px;top:263.0px;font-size:9.5px;color:#1a1a1a;transform:scaleX(0.836);">00:03:40</span>
<span class="t" style="left:623.4px;top:263.0px;font-size:9.5px;color:#1a1a1a;transform:scaleX(0.836);">00:04:00</span>
<span class="t" style="left:662.0px;top:263.0px;font-size:9.5px;color:#1a1a1a;transform:scaleX(0.836);">00:04:20</span>
<span class="t" style="left:700.5px;top:263.0px;font-size:9.5px;color:#1a1a1a;transform:scaleX(0.836);">00:04:40</span>
<span class="t" style="left:739.1px;top:263.0px;font-size:9.5px;color:#1a1a1a;transform:scaleX(0.836);">00:05:00</span>
<span class="t" style="left:777.7px;top:263.0px;font-size:9.5px;color:#1a1a1a;transform:scaleX(0.836);">00:05:20</span>
<span class="t" style="left:138.9px;top:286.6px;font-size:9.5px;color:#1a1a1a;transform:scaleX(0.837);">Steps</span>
<span class="t" style="left:144.3px;top:302.3px;font-size:9.5px;color:#1a1a1a;transform:scaleX(0.982);">Number</span>
<span class="t" style="left:187.6px;top:302.3px;font-size:9.5px;color:#1a1a1a;transform:scaleX(0.953);">Name</span>
<span class="t" style="left:340.0px;top:302.3px;font-size:9.5px;color:#1a1a1a;transform:scaleX(0.922);">Chamber Temperature (°C)</span>
<span class="t" style="left:457.9px;top:302.3px;font-size:9.5px;color:#1a1a1a;transform:scaleX(0.929);">Coolant Temperature (°C)</span>
<span class="t" style="left:568.6px;top:302.3px;font-size:9.5px;color:#1a1a1a;transform:scaleX(0.963);white-space:pre;">Coolant  Flow (L/min)</span>
<span class="t" style="left:663.6px;top:302.3px;font-size:9.5px;color:#1a1a1a;transform:scaleX(0.910);">NOT in Range Alarms Enabled</span>
<span class="t" style="left:805.4px;top:302.3px;font-size:9.5px;color:#1a1a1a;transform:scaleX(0.971);">Duration</span>
<span class="t" style="left:144.3px;top:315.1px;font-size:9.5px;color:#1a1a1a;transform:scaleX(1.000);">1</span>
<span class="t" style="left:187.7px;top:315.1px;font-size:9.5px;color:#1a1a1a;transform:scaleX(0.858);">Step 1</span>
<span class="t" style="left:340.1px;top:315.1px;font-size:9.5px;color:#1a1a1a;transform:scaleX(0.898);">25</span>
<span class="t" style="left:458.0px;top:315.1px;font-size:9.5px;color:#1a1a1a;transform:scaleX(0.898);">22</span>
<span class="t" style="left:570.0px;top:315.1px;font-size:9.5px;color:#1a1a1a;transform:scaleX(0.857);">10,0</span>
<span class="t" style="left:662.1px;top:315.1px;font-size:9.5px;color:#1a1a1a;transform:scaleX(0.805);">FALSE</span>
<span class="t" style="left:791.8px;top:315.1px;font-size:9.5px;color:#1a1a1a;transform:scaleX(0.867);">00:00:30</span>
<span class="t" style="left:144.3px;top:328.4px;font-size:9.5px;color:#1a1a1a;transform:scaleX(1.000);">2</span>
<span class="t" style="left:187.7px;top:328.4px;font-size:9.5px;color:#1a1a1a;transform:scaleX(0.858);">Step 2</span>
<span class="t" style="left:340.1px;top:328.4px;font-size:9.5px;color:#1a1a1a;transform:scaleX(0.898);">45</span>
<span class="t" style="left:458.0px;top:328.4px;font-size:9.5px;color:#1a1a1a;transform:scaleX(0.898);">35</span>
<span class="t" style="left:570.0px;top:328.4px;font-size:9.5px;color:#1a1a1a;transform:scaleX(0.857);">12,0</span>
<span class="t" style="left:662.1px;top:328.4px;font-size:9.5px;color:#1a1a1a;transform:scaleX(0.805);">FALSE</span>
<span class="t" style="left:791.8px;top:328.4px;font-size:9.5px;color:#1a1a1a;transform:scaleX(0.867);">00:01:00</span>
<span class="t" style="left:144.3px;top:341.7px;font-size:9.5px;color:#1a1a1a;transform:scaleX(1.000);">3</span>
<span class="t" style="left:187.7px;top:341.7px;font-size:9.5px;color:#1a1a1a;transform:scaleX(0.858);">Step 3</span>
<span class="t" style="left:340.1px;top:341.7px;font-size:9.5px;color:#1a1a1a;transform:scaleX(0.898);">45</span>
<span class="t" style="left:458.0px;top:341.7px;font-size:9.5px;color:#1a1a1a;transform:scaleX(0.898);">35</span>
<span class="t" style="left:570.0px;top:341.7px;font-size:9.5px;color:#1a1a1a;transform:scaleX(0.857);">12,0</span>
<span class="t" style="left:662.1px;top:341.7px;font-size:9.5px;color:#1a1a1a;transform:scaleX(0.805);">FALSE</span>
<span class="t" style="left:791.8px;top:341.7px;font-size:9.5px;color:#1a1a1a;transform:scaleX(0.867);">00:00:30</span>
<span class="t" style="left:144.3px;top:355.0px;font-size:9.5px;color:#1a1a1a;transform:scaleX(1.000);">4</span>
<span class="t" style="left:187.7px;top:355.0px;font-size:9.5px;color:#1a1a1a;transform:scaleX(0.858);">Step 4</span>
<span class="t" style="left:340.0px;top:355.0px;font-size:9.5px;color:#1a1a1a;transform:scaleX(0.903);">-10</span>
<span class="t" style="left:457.9px;top:355.0px;font-size:9.5px;color:#1a1a1a;transform:scaleX(1.000);">0</span>
<span class="t" style="left:570.0px;top:355.0px;font-size:9.5px;color:#1a1a1a;transform:scaleX(0.857);">15,0</span>
<span class="t" style="left:662.1px;top:355.0px;font-size:9.5px;color:#1a1a1a;transform:scaleX(0.805);">FALSE</span>
<span class="t" style="left:791.8px;top:355.0px;font-size:9.5px;color:#1a1a1a;transform:scaleX(0.867);">00:01:15</span>
<span class="t" style="left:144.3px;top:368.2px;font-size:9.5px;color:#1a1a1a;transform:scaleX(1.000);">5</span>
<span class="t" style="left:187.7px;top:368.2px;font-size:9.5px;color:#1a1a1a;transform:scaleX(0.858);">Step 5</span>
<span class="t" style="left:340.0px;top:368.2px;font-size:9.5px;color:#1a1a1a;transform:scaleX(0.903);">-10</span>
<span class="t" style="left:457.9px;top:368.2px;font-size:9.5px;color:#1a1a1a;transform:scaleX(1.000);">0</span>
<span class="t" style="left:570.0px;top:368.2px;font-size:9.5px;color:#1a1a1a;transform:scaleX(0.857);">15,0</span>
<span class="t" style="left:662.1px;top:368.2px;font-size:9.5px;color:#1a1a1a;transform:scaleX(0.805);">FALSE</span>
<span class="t" style="left:791.8px;top:368.2px;font-size:9.5px;color:#1a1a1a;transform:scaleX(0.867);">00:01:20</span>
<span class="t" style="left:144.3px;top:381.6px;font-size:9.5px;color:#1a1a1a;transform:scaleX(1.000);">6</span>
<span class="t" style="left:187.7px;top:381.6px;font-size:9.5px;color:#1a1a1a;transform:scaleX(0.858);">Step 6</span>
<span class="t" style="left:340.1px;top:381.6px;font-size:9.5px;color:#1a1a1a;transform:scaleX(0.898);">25</span>
<span class="t" style="left:458.0px;top:381.6px;font-size:9.5px;color:#1a1a1a;transform:scaleX(0.898);">25</span>
<span class="t" style="left:570.0px;top:381.6px;font-size:9.5px;color:#1a1a1a;transform:scaleX(0.857);">10,0</span>
<span class="t" style="left:662.1px;top:381.6px;font-size:9.5px;color:#1a1a1a;transform:scaleX(0.805);">FALSE</span>
<span class="t" style="left:791.8px;top:381.6px;font-size:9.5px;color:#1a1a1a;transform:scaleX(0.867);">00:00:10</span>
<span class="t" style="left:144.3px;top:394.9px;font-size:9.5px;color:#fff;transform:scaleX(1.000);">7</span>
<span class="t" style="left:187.7px;top:394.9px;font-size:9.5px;color:#fff;transform:scaleX(0.858);">Step 7</span>
<span class="t" style="left:340.1px;top:394.9px;font-size:9.5px;color:#fff;transform:scaleX(0.898);">25</span>
<span class="t" style="left:458.0px;top:394.9px;font-size:9.5px;color:#fff;transform:scaleX(0.898);">25</span>
<span class="t" style="left:570.0px;top:394.9px;font-size:9.5px;color:#fff;transform:scaleX(0.857);">10,0</span>
<span class="t" style="left:662.1px;top:394.9px;font-size:9.5px;color:#fff;transform:scaleX(0.805);">FALSE</span>
<span class="t" style="left:791.8px;top:394.9px;font-size:9.5px;color:#fff;transform:scaleX(0.867);">00:00:20</span>
<span class="t" style="left:144.9px;top:466.3px;font-size:9.5px;color:#1a1a1a;transform:scaleX(0.905);">Insert Step Before</span>
<span class="t" style="left:237.5px;top:466.3px;font-size:9.5px;color:#1a1a1a;transform:scaleX(0.952);">Modify Step</span>
<span class="t" style="left:321.8px;top:466.3px;font-size:9.5px;color:#1a1a1a;transform:scaleX(0.900);">Delete Step</span>
<span class="t" style="left:169.5px;top:519.4px;font-size:9.5px;color:#1a1a1a;transform:scaleX(1.000);">New</span>
<span class="t" style="left:233.5px;top:519.4px;font-size:9.5px;color:#1a1a1a;transform:scaleX(0.943);">Load from File</span>
<span class="t" style="left:317.9px;top:519.4px;font-size:9.5px;color:#1a1a1a;transform:scaleX(0.930);">Load from DB</span>
<span class="t" style="left:408.2px;top:519.4px;font-size:9.5px;color:#1a1a1a;transform:scaleX(0.882);">Save to DB</span>
<span class="t" style="left:496.1px;top:519.4px;font-size:9.5px;color:#1a1a1a;transform:scaleX(0.913);">Export...</span>
<span class="t" style="left:826.1px;top:519.4px;font-size:9.5px;color:#1a1a1a;transform:scaleX(1.022);">Quit</span>
<span class="t" style="left:717.5px;top:455.1px;font-size:9.5px;color:#1a1a1a;transform:scaleX(0.922);">Starting Temperature (°C)</span>
<span class="t" style="left:708.7px;top:466.3px;font-size:9.5px;color:#1a1a1a;transform:scaleX(0.917);">(*For display purposes only)</span>
<span class="t" style="left:852.0px;top:460.8px;font-size:9.5px;color:#1a1a1a;transform:scaleX(0.856);">25</span>
<span class="t" style="left:451.3px;top:274.9px;font-size:9.5px;color:#1a1a1a;transform:scaleX(0.921);">Time (hh:mm:ss)</span>
</body></html>
